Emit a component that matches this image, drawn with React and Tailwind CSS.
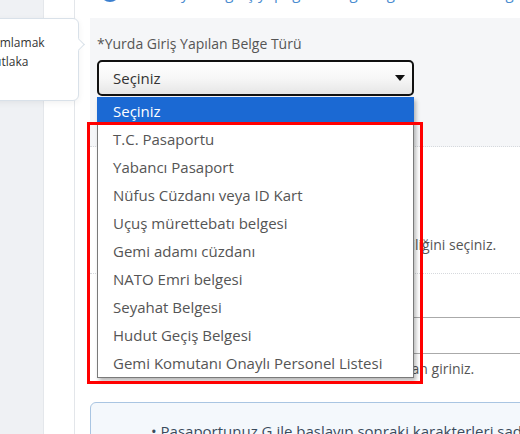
import React from "react";

const items = [
  "T.C. Pasaportu",
  "Yabancı Pasaport",
  "Nüfus Cüzdanı veya ID Kart",
  "Uçuş mürettebatı belgesi",
  "Gemi adamı cüzdanı",
  "NATO Emri belgesi",
  "Seyahat Belgesi",
  "Hudut Geçiş Belgesi",
  "Gemi Komutanı Onaylı Personel Listesi",
];

export default function App() {
  return (
    <div
      className="relative flex h-[434px] w-[520px] overflow-hidden bg-white"
      style={{ fontFamily: '"Open Sans", "Noto Sans", sans-serif' }}
    >
      {/* left sidebar */}
      <div className="h-full w-[44px] shrink-0 bg-[#eff1f4] border-r border-[#e4e7eb]" />
      <div className="h-full w-[31px] shrink-0 bg-white border-r border-[#e3e6ea]" />

      {/* main */}
      <div className="min-w-0 flex-1 pl-[15px]">
        <div className="w-[640px]">
          {/* header strip, cut off at top */}
          <div className="h-[18px] overflow-hidden">
            <div className="-mt-[22px] flex items-start gap-[12px] pl-[10px]">
              <div className="mt-[4px] h-[20px] w-[20px] shrink-0 rounded-full bg-[#3b7fcf]" />
              <div className="mt-[5px] whitespace-nowrap text-[15px] leading-[20px] text-[#4a8cd0]">
                Lütfen yurda giriş yaptığınız belge bilgilerinizi eksiksiz giriniz ve kontrol ediniz
              </div>
            </div>
          </div>

          {/* active section */}
          <div className="h-[129px] border-b border-dotted border-[#d6d9dd] bg-[#f5f6f8] px-[7px] pt-[16px]">
            <div className="h-[20px] text-[14px] leading-[20px] text-[#555]">
              *Yurda Giriş Yapılan Belge Türü
            </div>
            <div className="relative mt-[6px] w-[317px]">
              <div className="flex h-[36px] items-center justify-between rounded-[5px] border-2 border-[#111] bg-gradient-to-b from-white via-[#f7f7f7] to-[#e6e6e6] pl-[14px] pr-[6px]">
                <span className="text-[15px] text-[#333]">Seçiniz</span>
                <svg width="10" height="6" viewBox="0 0 10 6" className="mr-[1px]">
                  <path d="M0 0 L10 0 L5 6 Z" fill="#111" />
                </svg>
              </div>

              {/* open dropdown */}
              <div className="absolute left-0 top-[37px] z-10 w-[317px] border-x border-b border-[#7a7a7a] bg-white shadow-[2px_3px_4px_rgba(0,0,0,0.28)]">
                <div className="-mx-px flex h-[28px] items-center bg-[#1b69d3] pl-[16px] text-[15px] text-white">
                  Seçiniz
                </div>
                {items.map((t) => (
                  <div
                    key={t}
                    className="flex h-[28px] items-center whitespace-nowrap pl-[15px] text-[15px] text-[#555]"
                  >
                    {t}
                  </div>
                ))}
              </div>
            </div>
          </div>

          {/* section 2 */}
          <div className="h-[127px] border-b border-dotted border-[#d6d9dd] px-[7px] pt-[20px]">
            <div className="h-[20px] text-[14px] leading-[20px] text-[#555]">*Belge Geçerliliği</div>
            <div className="mt-[48px] h-[20px] whitespace-nowrap text-[14px] leading-[20px] text-[#555]">
              Lütfen yurda girişte kullandığınız belgenin geçerliliğini seçiniz.
            </div>
          </div>

          {/* section 3 */}
          <div className="px-[7px] pt-[16px]">
            <div className="h-[20px] text-[14px] leading-[20px] text-[#555]">*Belge Numarası</div>
            <div className="mt-[7px] h-[37px] w-[600px] border border-[#aaa] bg-white" />
            <div className="mt-[5px] h-[20px] whitespace-nowrap text-[14px] leading-[20px] text-[#555]">
              Belge numaranızı boşluk ve özel işaret bırakmadan giriniz.
            </div>
          </div>

          {/* info box */}
          <div className="mt-[23px] rounded-[6px] border border-[#a9c5e2] bg-[#f4f8fc] pl-[60px] pt-[17px]">
            <div className="whitespace-nowrap text-[15px] leading-[22px] text-[#3a4b5c]">
              • Pasaportunuz G ile başlayıp sonraki karakterleri sadece rakamlardan oluşuyorsa
            </div>
            <div className="h-[40px]" />
          </div>
        </div>
      </div>

      {/* tooltip overlay */}
      <div className="absolute left-[-30px] top-[18px] h-[83px] w-[109px] rounded-[6px] border border-[#d9e1e9] bg-white shadow-[0_2px_6px_rgba(0,0,0,0.06)]">
        <div className="absolute right-[-5px] top-[21px] h-[9px] w-[9px] rotate-45 border-r border-t border-[#d9e1e9] bg-white" />
        <div className="whitespace-nowrap pl-[29px] pt-[14px] text-[12px] leading-[19px] text-[#333]">
          <div className="-ml-[29px]">tamamlamak</div>
          <div className="-ml-[17px]">mutlaka</div>
        </div>
      </div>

      {/* red annotation */}
      <div className="pointer-events-none absolute left-[87px] top-[122px] z-20 h-[262px] w-[336px] border-[3px] border-[#ff0000]" />
    </div>
  );
}
